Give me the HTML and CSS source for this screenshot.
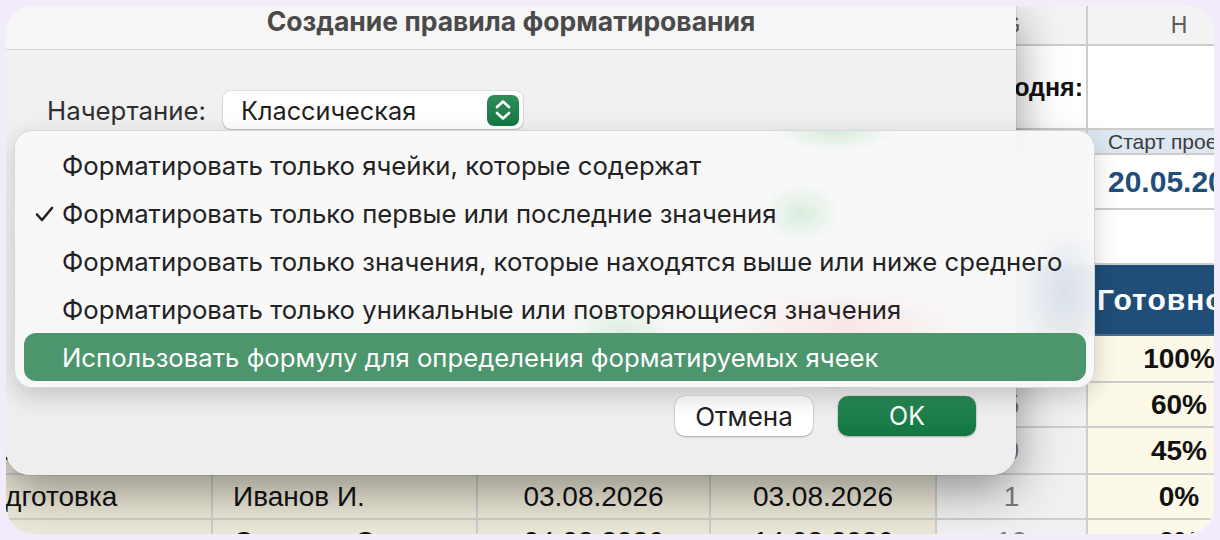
FILE: index.html
```html
<!DOCTYPE html>
<html lang="ru">
<head>
<meta charset="UTF-8">
<meta name="viewport" content="width=device-width, initial-scale=1.0">
<title>Создание правила форматирования</title>
<link rel="stylesheet" href="styles.css">
</head>
<body>

<div class="frame">
    <div class="screen">

        <!-- spreadsheet behind the dialog -->
        <div class="sheet">
            <div class="row hdr">
                <div>C</div><div>D</div><div>E</div><div>F</div><div>G</div><div>H</div>
            </div>
            <div class="row plain">
                <div></div><div></div><div></div><div></div><div class="today">Сегодня:</div><div></div>
            </div>
            <div class="row blue">
                <div></div><div></div><div></div><div></div><div></div><div>Старт проекта</div>
            </div>
            <div class="row plain">
                <div></div><div></div><div></div><div></div><div></div><div class="start">20.05.2026</div>
            </div>
            <div class="row plain">
                <div></div><div></div><div></div><div></div><div></div><div></div>
            </div>
            <div class="row navy">
                <div>Этап</div><div>Ответственный</div><div>Начало</div><div>Конец</div><div></div><div>Готовность</div>
            </div>
            <div class="row data">
                <div>Анализ</div><div>Петров П.</div><div class="c">20.05.2026</div><div class="c">22.05.2026</div><div class="g">3</div><div class="h">100%</div>
            </div>
            <div class="row data">
                <div>Дизайн</div><div>Смирнова А.</div><div class="c">23.05.2026</div><div class="c">27.05.2026</div><div class="g">5</div><div class="h">60%</div>
            </div>
            <div class="row data">
                <div>Разработка</div><div>Кузнецов Д.</div><div class="c">28.05.2026</div><div class="c">05.06.2026</div><div class="g">9</div><div class="h">45%</div>
            </div>
            <div class="row data">
                <div>Подготовка</div><div>Иванов И.</div><div class="c">03.08.2026</div><div class="c">03.08.2026</div><div class="g">1</div><div class="h">0%</div>
            </div>
            <div class="row data">
                <div>Сдача</div><div>Сидоров С.</div><div class="c">04.08.2026</div><div class="c">14.08.2026</div><div class="g">10</div><div class="h">0%</div>
            </div>
        </div>

        <!-- dialog -->
        <div class="dialog">
            <div class="dlg-title">Создание правила форматирования</div>
            <div class="dlg-body">
                <div class="field">
                    <span class="label">Начертание:</span>
                    <div class="select">
                        <span>Классическая</span>
                        <span class="stepper">
                            <svg width="20" height="24" viewBox="0 0 20 24">
                                <path d="M4 9 L10 3.5 L16 9" fill="none" stroke="#fff" stroke-width="2.6" stroke-linecap="round" stroke-linejoin="round"/>
                                <path d="M4 15 L10 20.5 L16 15" fill="none" stroke="#fff" stroke-width="2.6" stroke-linecap="round" stroke-linejoin="round"/>
                            </svg>
                        </span>
                    </div>
                </div>
                <div class="actions">
                    <button class="btn">Отмена</button>
                    <button class="btn primary">OK</button>
                </div>
            </div>
        </div>

        <!-- popup menu of the rule type -->
        <div class="menu">
            <div class="item">Форматировать только ячейки, которые содержат</div>
            <div class="item">
                <svg class="check" width="19" height="16" viewBox="0 0 19 16">
                    <path d="M2 8.5 L7 14 L17 2" fill="none" stroke="#222" stroke-width="2.6" stroke-linecap="round" stroke-linejoin="round"/>
                </svg>
                Форматировать только первые или последние значения
            </div>
            <div class="item">Форматировать только значения, которые находятся выше или ниже среднего</div>
            <div class="item">Форматировать только уникальные или повторяющиеся значения</div>
            <div class="item on">Использовать формулу для определения форматируемых ячеек</div>
        </div>

    </div>
</div>

</body>
</html>
```

FILE: styles.css
```css
body {
    margin: 0;
    font-family: Inter, "Noto Sans", sans-serif;
}
.frame {
    width: 1220px;
    height: 540px;
    box-sizing: border-box;
    padding: 6px;
    background: #f2ebfc;
}
.screen {
    position: relative;
    height: 100%;
    border-radius: 28px;
    overflow: hidden;
    background: #fff;
}

/* sheet */
.sheet {
    display: grid;
    grid-template-columns: 257px 265px 233px 226px 151px 184px;
    grid-template-rows: 40px 84px 25px 55px 55px 71px 47px 45px 47px 45px 46px;
    margin-left: -50px;
    font-family: "Liberation Sans", Arial, sans-serif;
    font-size: 28px;
    color: #111;
}
.row {
    display: contents;
}
.row > div {
    box-sizing: border-box;
    display: flex;
    align-items: center;
    padding: 0 20px;
    white-space: nowrap;
    overflow: hidden;
    border-right: 2px solid #cdcdcd;
    border-bottom: 2px solid #cdcdcd;
}
.row > div:first-child {
    padding-left: 14px;
}
.hdr > div {
    justify-content: center;
    background: #f3f3f3;
    color: #5c5c5c;
    font-size: 23px;
}
.plain > div {
    background: #fff;
}
.today {
    justify-content: flex-end;
    padding-right: 3px !important;
    font-weight: bold;
    font-size: 25px;
}
.blue > div {
    background: #dde7f2;
    color: #3c3c3c;
    font-size: 21px;
}
.start {
    font-weight: bold;
    font-size: 30px;
    color: #1f4e79;
}
.navy > div {
    background: #1f4e79;
    border-color: #4a6f93;
    color: #fff;
    font-weight: bold;
    font-size: 30px;
    letter-spacing: 1px;
}
.navy > div:last-child {
    padding-left: 9px;
}
.data > div {
    background: #ece8d8;
}
.data > .c {
    justify-content: center;
}
.data > .g {
    justify-content: center;
    background: #f0f0f0;
    color: #7a7a7a;
}
.data > .h {
    justify-content: center;
    background: #fdf9e8;
    font-weight: bold;
}

/* dialog */
.dialog {
    position: absolute;
    left: 0;
    top: 0;
    width: 1010px;
    height: 469px;
    display: flex;
    flex-direction: column;
    background: linear-gradient(#f1f1f1, #eeeeee);
    border-radius: 0 0 24px 24px;
    box-shadow: 0 14px 48px rgba(0, 0, 0, 0.42), 0 0 0 1px rgba(0, 0, 0, 0.08);
}
.dlg-title {
    height: 44px;
    box-sizing: border-box;
    border-bottom: 1px solid #d3d3d3;
    background: #f6f6f6;
    text-align: center;
    font-weight: 700;
    font-size: 26.5px;
    line-height: 31px;
    color: #4a4a4a;
}
.dlg-body {
    flex: 1;
    display: flex;
    flex-direction: column;
    padding: 41px 40px 39px 41px;
}
.field {
    display: flex;
    align-items: center;
    gap: 17px;
}
.label {
    font-size: 25.8px;
    color: #2f2f2f;
}
.select {
    width: 300px;
    height: 38px;
    box-sizing: border-box;
    display: flex;
    align-items: center;
    justify-content: space-between;
    padding: 0 4px 0 18px;
    background: #fff;
    border-radius: 8px;
    box-shadow: 0 1px 2px rgba(0, 0, 0, 0.22), 0 0 0 0.5px rgba(0, 0, 0, 0.1);
    font-size: 25.3px;
    color: #1f1f1f;
}
.stepper {
    width: 32px;
    height: 31px;
    display: flex;
    align-items: center;
    justify-content: center;
    border-radius: 7px;
    background: linear-gradient(#2f8d5a, #137843);
}
.actions {
    margin-top: auto;
    display: flex;
    justify-content: flex-end;
    gap: 25px;
}
.btn {
    width: 138px;
    height: 40px;
    border: none;
    border-radius: 10px;
    font-family: inherit;
    font-size: 26px;
    background: #fff;
    color: #222;
    box-shadow: 0 1px 2px rgba(0, 0, 0, 0.25), 0 0 0 0.5px rgba(0, 0, 0, 0.12);
}
.btn.primary {
    background: linear-gradient(#2a8956, #107640);
    color: #fff;
    font-size: 25px;
}

/* popup menu */
.menu {
    position: absolute;
    left: 8px;
    top: 124px;
    width: 1081px;
    height: 258px;
    box-sizing: border-box;
    padding: 10px 8px 6px 9px;
    border-radius: 18px;
    border: 1px solid rgba(0, 0, 0, 0.13);
    background:
        radial-gradient(ellipse 40px 30px at 786px 82px, rgba(110, 200, 130, 0.22), transparent),
        radial-gradient(ellipse 50px 30px at 606px 200px, rgba(110, 200, 130, 0.2), transparent),
        radial-gradient(ellipse 130px 40px at 830px 195px, rgba(255, 150, 150, 0.18), transparent),
        radial-gradient(ellipse 40px 70px at 1050px 160px, rgba(120, 150, 190, 0.2), transparent),
        radial-gradient(ellipse 60px 20px at 820px 0px, rgba(110, 200, 130, 0.25), transparent),
        rgba(248, 248, 248, 0.97);
    box-shadow: 0 8px 24px rgba(0, 0, 0, 0.18);
}
.item {
    position: relative;
    height: 48px;
    display: flex;
    align-items: center;
    padding-left: 38px;
    border-radius: 12px;
    font-size: 25.7px;
    color: #222;
    white-space: nowrap;
}
.item.on {
    background: #4d956d;
    color: #fff;
}
.check {
    position: absolute;
    left: 11px;
    top: 17px;
}
```
